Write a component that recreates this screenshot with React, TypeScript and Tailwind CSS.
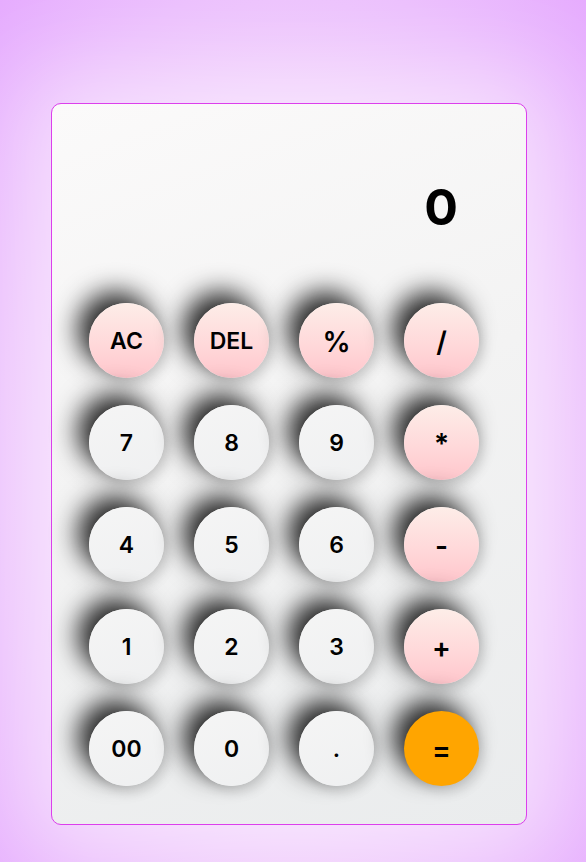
const keys = [
  { label: "AC", kind: "op" },
  { label: "DEL", kind: "op" },
  { label: "%", kind: "op", big: true },
  { label: "/", kind: "op", big: true },
  { label: "7" },
  { label: "8" },
  { label: "9" },
  { label: "*", kind: "op", big: true },
  { label: "4" },
  { label: "5" },
  { label: "6" },
  { label: "-", kind: "op", big: true },
  { label: "1" },
  { label: "2" },
  { label: "3" },
  { label: "+", kind: "op", big: true },
  { label: "00" },
  { label: "0" },
  { label: "." },
  { label: "=", kind: "eq", big: true },
];

export default function App() {
  return (
    <div
      className="min-h-screen w-full bg-[radial-gradient(ellipse_at_50%_55%,#f6e2fd_0%,#f3d6fc_45%,#ecc0fd_75%,#e6acfe_100%)] pt-[103px] pl-[51px]"
      style={{ fontFamily: "Inter, 'Noto Sans', sans-serif" }}
    >
      {/* Calculator card */}
      <div className="w-[476px] h-[722px] rounded-[10px] border border-[#dc3fec] bg-[linear-gradient(160deg,#fbfafa_0%,#f3f3f3_45%,#eaeced_100%)] shadow-[0_0_90px_30px_rgba(255,255,255,0.45)] flex flex-col">
        {/* Display */}
        <div className="pt-[78px] pr-[68px] h-[199px] text-right">
          <span className="text-[50px] leading-[50px] font-bold text-black">0</span>
        </div>

        {/* Keys */}
        <div className="grid grid-cols-[repeat(4,75px)] gap-x-[30px] gap-y-[27px] pl-[37px]">
          {keys.map((k) => (
            <button
              key={k.label}
              className={
                "w-[75px] h-[75px] rounded-full flex items-center justify-center pt-[2px] font-semibold text-black shadow-[-11px_-11px_26px_rgba(0,0,0,0.85),4px_6px_12px_rgba(0,0,0,0.12)] " +
                (k.kind === "op"
                  ? "bg-[linear-gradient(180deg,#fdede8_0%,#ffd9da_55%,#ffc6cc_100%)] "
                  : k.kind === "eq"
                  ? "bg-[#ffa500] "
                  : "bg-[linear-gradient(160deg,#f5f5f5_0%,#eff0f1_100%)] ") +
                (k.big ? "text-[28px]" : "text-[23px]")
              }
            >
              {k.label}
            </button>
          ))}
        </div>
      </div>
    </div>
  );
}
